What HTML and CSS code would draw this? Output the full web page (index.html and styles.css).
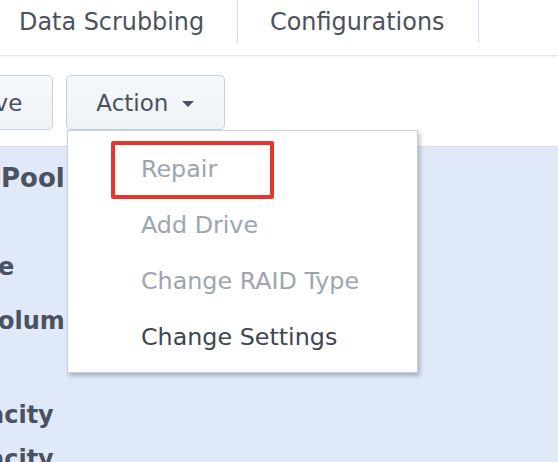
FILE: index.html
```html
<!DOCTYPE html>
<html lang="en">
<head>
<meta charset="utf-8">
<title>Storage Pool Action</title>
<link rel="stylesheet" href="styles.css">
</head>
<body>
<div class="page">
  <div class="tabs">
    <div class="tab tab-first">Data Scrubbing</div>
    <div class="tab tab-second">Configurations</div>
  </div>
  <div class="toolbar">
    <button class="btn btn-remove">Remove</button>
    <button class="btn btn-action">Action<span class="caret"></span></button>
  </div>
  <div class="panel">
    <div class="label row1">Pool</div>
    <div class="label row2">e</div>
    <div class="label row3">olum</div>
    <div class="label row4">acity</div>
    <div class="label row5">acity</div>
  </div>
  <div class="menu">
    <div class="item disabled">Repair</div>
    <div class="item disabled">Add Drive</div>
    <div class="item disabled">Change RAID Type</div>
    <div class="item">Change Settings</div>
    <div class="highlight"></div>
  </div>
</div>
</body>
</html>
```

FILE: styles.css
```css
html, body {
  margin: 0;
  padding: 0;
  background: #ffffff;
}
.page {
  position: relative;
  width: 558px;
  height: 462px;
  overflow: hidden;
  font-family: "DejaVu Sans", "Noto Sans", sans-serif;
  color: #4a5260;
  display: flex;
  flex-direction: column;
}
.tabs {
  display: flex;
  height: 55px;
  border-bottom: 1px solid #e4e5e7;
  box-shadow: 0 1px 3px rgba(0, 0, 0, 0.06);
  flex: none;
}
.tab {
  box-sizing: border-box;
  height: 43px;
  line-height: 44px;
  font-size: 23.9px;
  color: #4a5260;
  border-right: 1px solid #d6dee9;
  white-space: nowrap;
}
.tab-first {
  width: 238px;
  padding-left: 19px;
}
.tab-second {
  width: 241px;
  padding-left: 32px;
}
.toolbar {
  display: flex;
  gap: 13px;
  padding-top: 19px;
  flex: none;
}
.btn {
  box-sizing: border-box;
  height: 55px;
  border: 1px solid #c7cfd9;
  border-radius: 5px;
  background: linear-gradient(#f4f7fb, #eff3f8);
  font-family: "DejaVu Sans", "Noto Sans", sans-serif;
  font-size: 23px;
  color: #4a5260;
  padding: 0 30px;
  display: flex;
  align-items: center;
  white-space: nowrap;
}
.btn-remove {
  margin-left: -102px;
}
.btn-action {
  padding: 0 30px 0 29px;
}
.caret {
  width: 0;
  height: 0;
  margin-left: 14px;
  margin-top: 2px;
  border-left: 6px solid transparent;
  border-right: 6px solid transparent;
  border-top: 6px solid #4a5260;
}
.panel {
  margin-top: 16px;
  flex: 1;
  background: #dfe9f7;
  border-top: 1px solid #d3dce8;
  padding-top: 17px;
}
.label {
  font-weight: bold;
  font-size: 24px;
  line-height: 28px;
  height: 28px;
  color: #4a5260;
  white-space: nowrap;
}
.row1 { margin-left: 1px; font-size: 26px; }
.row2 { margin-top: 61px; margin-left: -2px; }
.row3 { margin-top: 26px; margin-left: -2px; }
.row4 { margin-top: 66px; margin-left: -12px; }
.row5 { margin-top: 16px; margin-left: -12px; }
.menu {
  position: absolute;
  left: 67px;
  top: 130px;
  width: 351px;
  height: 243px;
  box-sizing: border-box;
  background: #ffffff;
  border: 1px solid #c7cfd9;
  box-shadow: 2px 3px 4px rgba(40, 50, 70, 0.3);
  padding-top: 10px;
}
.item {
  padding-left: 73px;
  font-size: 23.8px;
  line-height: 56px;
  height: 56px;
  color: #3e4651;
  white-space: nowrap;
}
.item.disabled {
  color: #9ca5af;
}
.highlight {
  position: absolute;
  left: 43px;
  top: 10px;
  width: 163px;
  height: 58px;
  box-sizing: border-box;
  border: 4px solid #e6352a;
  border-radius: 2px;
}
```
